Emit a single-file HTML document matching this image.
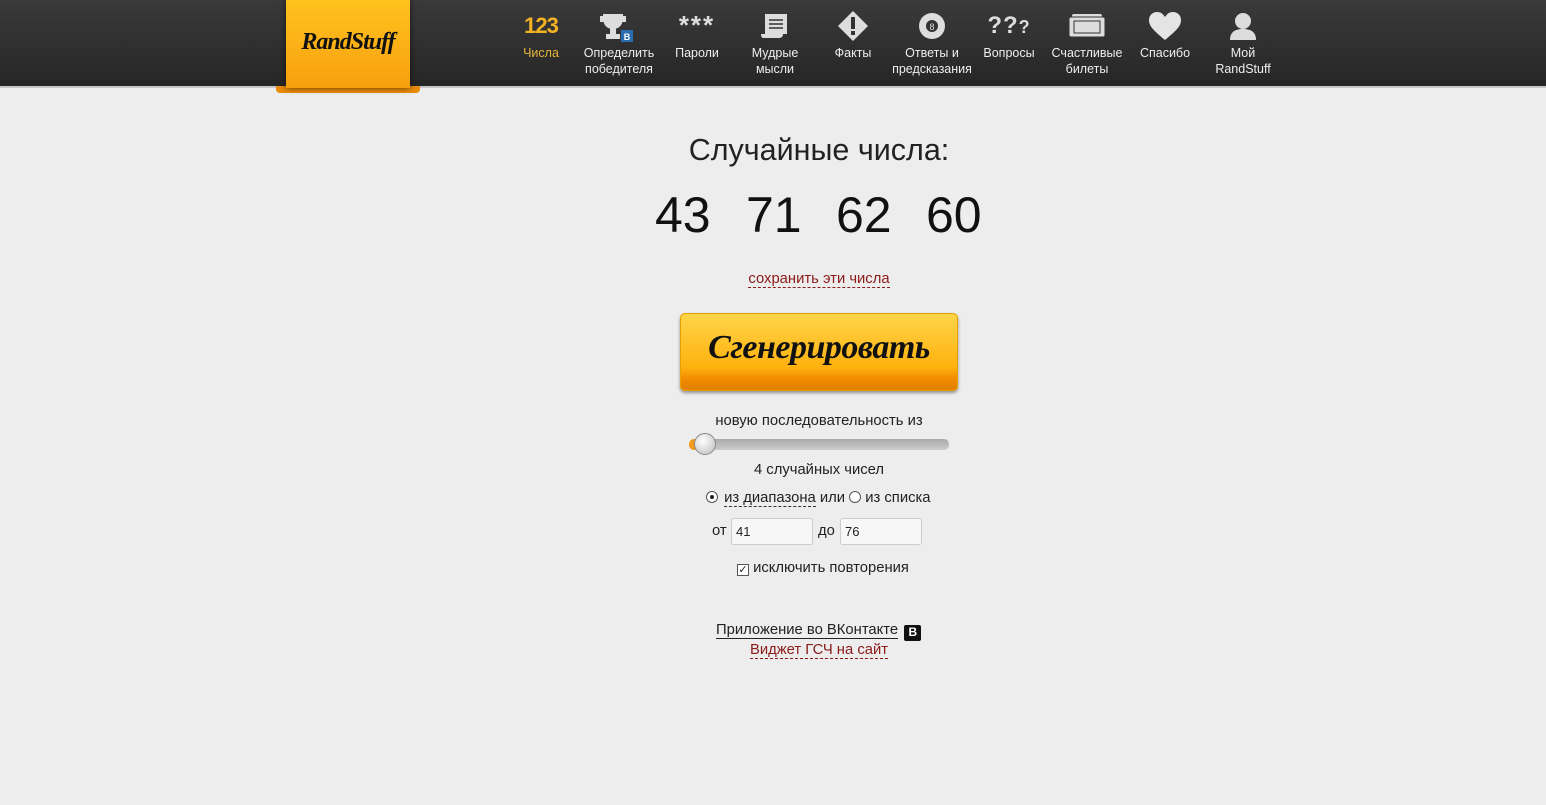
<!DOCTYPE html>
<html><head><meta charset="utf-8"><style>
*{margin:0;padding:0;box-sizing:border-box}
body{width:1546px;height:805px;overflow:hidden;background:#ededed;font-family:"Liberation Sans","DejaVu Sans",sans-serif;color:#222;position:relative}
#hdr{position:absolute;left:0;top:0;width:1546px;height:88px;background:linear-gradient(#3a3a3a,#262626);border-bottom:2px solid #c9c9c9}
#logo{position:absolute;left:286px;top:0;width:124px;height:88px;background:linear-gradient(#ffc21e,#f7a00e);box-shadow:0 0 6px rgba(0,0,0,.6)}
#fold{position:absolute;left:276px;top:86px;width:144px;height:7px;background:#e88a0a;border-radius:0 0 4px 4px}
#logo span{position:absolute;left:0;width:124px;top:29px;text-align:center;font:bold italic 24px "Liberation Serif",serif;color:#111;letter-spacing:-1px}
.n{position:absolute;top:0;width:90px;margin-left:-45px;text-align:center;color:#eee;font-size:12.5px;line-height:16px}
.n .ic{height:45px;display:flex;align-items:center;justify-content:center;padding-top:6px}
.c{position:absolute;left:46px;width:1546px;text-align:center}
.lk{color:#8b1a1a;border-bottom:1px dashed #8b1a1a}
.f{font-size:14.8px}
</style></head><body>
<div id="hdr"></div>
<div id="fold"></div>
<div id="logo"><span>RandStuff</span></div>

<div class="n" style="left:541px"><div class="ic"><span style="font:bold 22px 'Liberation Sans';color:#f4b323;letter-spacing:-1px">123</span></div><div style="color:#e9b43a">Числа</div></div>
<div class="n" style="left:619px"><div class="ic"><svg width="40" height="32"><path d="M4 4h20v4c0 7-4 11-10 11S4 15 4 8z" fill="#ddd"/><path d="M1 6h4v6H1z M23 6h4v6h-4z" fill="#ddd"/><rect x="11" y="18" width="6" height="6" fill="#ddd"/><rect x="7" y="24" width="14" height="5" fill="#ddd"/><rect x="22" y="20" width="12" height="12" fill="#2a6cb0"/><text x="28" y="30" font-size="9" font-weight="bold" fill="#fff" text-anchor="middle" font-family="Liberation Sans">B</text></svg></div><div>Определить<br>победителя</div></div>
<div class="n" style="left:697px"><div class="ic"><span style="font:bold 26px 'Liberation Sans';color:#ddd;letter-spacing:2px">***</span></div><div>Пароли</div></div>
<div class="n" style="left:775px"><div class="ic"><svg width="32" height="28"><path d="M6 2h22v20H6z" fill="#ddd"/><path d="M2 22h22c0 3-2 4-4 4H4c-2 0-2-4-2-4z" fill="#ddd"/><path d="M10 8h14M10 12h14M10 16h14" stroke="#333" stroke-width="1.5"/></svg></div><div>Мудрые<br>мысли</div></div>
<div class="n" style="left:853px"><div class="ic"><svg width="32" height="32"><path d="M16 1L31 16 16 31 1 16z" fill="#ddd"/><rect x="14" y="7" width="4" height="12" fill="#333"/><rect x="14" y="21" width="4" height="4" fill="#333"/></svg></div><div>Факты</div></div>
<div class="n" style="left:932px"><div class="ic"><svg width="28" height="28"><circle cx="14" cy="14" r="13" fill="#ddd"/><circle cx="14" cy="14" r="6" fill="#333"/><text x="14" y="18" font-size="9" fill="#ddd" text-anchor="middle" font-family="Liberation Sans">8</text></svg></div><div>Ответы и<br>предсказания</div></div>
<div class="n" style="left:1009px"><div class="ic"><span style="font:bold 24px 'Liberation Sans';color:#ddd;letter-spacing:1px">??<small style="font-size:18px">?</small></span></div><div>Вопросы</div></div>
<div class="n" style="left:1087px"><div class="ic"><svg width="38" height="26"><rect x="4" y="1" width="30" height="22" rx="2" fill="#ddd"/><rect x="1" y="4" width="36" height="20" rx="2" fill="#ddd" stroke="#333"/><rect x="6" y="8" width="26" height="12" fill="#ddd" stroke="#333"/></svg></div><div>Счастливые<br>билеты</div></div>
<div class="n" style="left:1165px"><div class="ic"><svg width="34" height="30"><path d="M17 29C5 19 1 15 1 9 1 4 5 1 9 1c4 0 6 2 8 5 2-3 4-5 8-5 4 0 8 3 8 8 0 6-4 10-16 20z" fill="#e4e4e4"/></svg></div><div>Спасибо</div></div>
<div class="n" style="left:1243px"><div class="ic"><svg width="30" height="30"><circle cx="15" cy="10" r="8" fill="#ddd"/><path d="M2 29c0-8 5-11 13-11s13 3 13 11z" fill="#ddd"/></svg></div><div>Мой<br>RandStuff</div></div>

<div class="c" style="top:133px;font-size:30.5px">Случайные числа:</div>
<div style="position:absolute;top:186px;left:0;width:1546px;font-size:50px;color:#111">
<span style="position:absolute;left:655px">43</span><span style="position:absolute;left:746px">71</span><span style="position:absolute;left:836px">62</span><span style="position:absolute;left:926px">60</span></div>
<div class="c f" style="top:271px"><span class="lk">сохранить эти числа</span></div>
<div style="position:absolute;left:680px;top:313px;width:278px;height:78px;border-radius:5px;background:linear-gradient(#ffd54a,#ffb10e 70%,#f08a00 85%,#e08000);box-shadow:0 2px 3px rgba(0,0,0,.4),inset 0 0 0 1px #e6a000"><div style="text-align:center;font:bold italic 34px 'Liberation Serif',serif;color:#111;margin-top:16px;letter-spacing:-0.5px">Сгенерировать</div></div>
<div class="c f" style="top:413px">новую последовательность из</div>
<div style="position:absolute;left:689px;top:439px;width:260px;height:11px;border-radius:5px;background:linear-gradient(#aaa,#ccc)"></div>
<div style="position:absolute;left:689px;top:439px;width:14px;height:11px;border-radius:5px 0 0 5px;background:#f39a1a"></div>
<div style="position:absolute;left:694px;top:433px;width:22px;height:22px;border-radius:50%;background:radial-gradient(circle at 40% 35%,#fff,#bbb);border:1px solid #888"></div>
<div class="c f" style="top:462px">4 случайных чисел</div>
<div class="f" style="position:absolute;top:490px;left:706px;white-space:nowrap">
<span style="display:inline-block;width:12px;height:12px;border:1px solid #555;border-radius:50%;vertical-align:-1px;position:relative;background:#fff"><span style="position:absolute;left:3px;top:3px;width:4px;height:4px;border-radius:50%;background:#222"></span></span>
<span style="border-bottom:1px dashed #333;margin-left:2px">из диапазона</span> или <span style="display:inline-block;width:12px;height:12px;border:1px solid #555;border-radius:50%;vertical-align:-1px;background:#fff"></span> из списка</div>
<div class="f" style="position:absolute;top:523px;left:712px">от</div>
<div style="position:absolute;top:518px;left:731px;width:82px;height:27px;border:1px solid #ccc;border-radius:3px;background:#f7f7f7;font-size:13px;padding:5px 4px">41</div>
<div class="f" style="position:absolute;top:523px;left:818px">до</div>
<div style="position:absolute;top:518px;left:840px;width:82px;height:27px;border:1px solid #ccc;border-radius:3px;background:#f7f7f7;font-size:13px;padding:5px 4px">76</div>
<div class="f" style="position:absolute;top:560px;left:737px;white-space:nowrap"><span style="display:inline-block;width:12px;height:12px;border:1px solid #555;background:#fff;vertical-align:-1px;font-size:11px;line-height:10px;text-align:center">✓</span> исключить повторения</div>
<div class="f" style="position:absolute;top:622px;left:716px;white-space:nowrap"><span style="border-bottom:1px solid #222">Приложение во ВКонтакте</span> <span style="display:inline-block;background:#111;color:#fff;font-weight:bold;font-size:12px;width:17px;height:16px;text-align:center;border-radius:2px;margin-left:2px;vertical-align:-2px">B</span></div>
<div class="c f" style="top:642px"><span class="lk">Виджет ГСЧ на сайт</span></div>
</body></html>
